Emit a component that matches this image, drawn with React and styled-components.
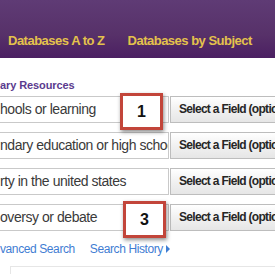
import React from "react";
import styled, { createGlobalStyle } from "styled-components";

const GlobalStyle = createGlobalStyle`
    html, body {
        margin: 0;
        padding: 0;
        background: #ffffff;
        overflow: hidden;
    }
    body {
        width: 275px;
        height: 274px;
        font-family: "Liberation Sans", Arial, sans-serif;
    }
`;

const Header = styled.div`
    height: 58px;
    box-sizing: border-box;
    display: flex;
    align-items: flex-start;
    gap: 23px;
    padding: 34px 0 0 8px;
    background: linear-gradient(#5f3b75, #573169 60%, #4b1f62);
    white-space: nowrap;
`;

const NavLink = styled.span`
    font-size: 13px;
    line-height: 14px;
    font-weight: bold;
    letter-spacing: -0.5px;
    color: #e4c24c;
`;

const Content = styled.div`
    position: relative;
    padding-top: 20px;
`;

const SectionTitle = styled.div`
    font-size: 11px;
    line-height: 14px;
    font-weight: bold;
    letter-spacing: -0.1px;
    color: #5b3b8e;
    margin-bottom: 4px;
    white-space: nowrap;
`;

const Rows = styled.div`
    display: flex;
    flex-direction: column;
    gap: 9px;
`;

const Row = styled.div`
    display: flex;
    height: 27px;
    gap: 1px;
`;

const TermInput = styled.div`
    width: 169px;
    flex: none;
    box-sizing: border-box;
    border: 1px solid #c9c9c9;
    border-left: none;
    overflow: hidden;
    white-space: nowrap;
    font-size: 14px;
    line-height: 25px;
    letter-spacing: -0.45px;
    color: #3a3a3a;
`;

const FieldSelect = styled.div`
    width: 105px;
    flex: none;
    box-sizing: border-box;
    border: 1px solid #bdbdbd;
    border-right: none;
    background: linear-gradient(#ffffff, #f1f1f1 50%, #e6e6e6);
    padding-left: 8px;
    overflow: hidden;
    white-space: nowrap;
    font-size: 12px;
    line-height: 25px;
    font-weight: bold;
    letter-spacing: -0.7px;
    color: #262626;
`;

const Links = styled.div`
    display: flex;
    align-items: center;
    gap: 15px;
    margin-top: 11px;
    white-space: nowrap;
`;

const TextLink = styled.span`
    font-size: 12px;
    line-height: 14px;
    letter-spacing: -0.4px;
    color: #3f7dd3;
    display: inline-flex;
    align-items: center;
    gap: 3px;
`;

const Arrow = styled.span`
    width: 0;
    height: 0;
    border-top: 4px solid transparent;
    border-bottom: 4px solid transparent;
    border-left: 4px solid #3f7dd3;
`;

const Panel = styled.div`
    margin: 10px 0 0 10px;
    height: 20px;
    border-top: 1px solid #e6e6e6;
    border-left: 1px solid #e6e6e6;
`;

const Badge = styled.div`
    position: absolute;
    left: ${(p) => p.$left}px;
    top: ${(p) => p.$top}px;
    width: 43px;
    height: 37px;
    box-sizing: border-box;
    border: 3px solid #c2453a;
    background: #ffffff;
    box-shadow: 1px 2px 4px rgba(0, 0, 0, 0.45);
    display: flex;
    align-items: center;
    justify-content: center;
    font-size: 16px;
    font-weight: bold;
    color: #111111;
`;

const rows = [
    "hools or learning",
    "ndary education or high school",
    "rty in the united states",
    "oversy or debate",
];

export default function App() {
    return (
        <>
            <GlobalStyle />
            <Header>
                <NavLink>Databases A to Z</NavLink>
                <NavLink>Databases by Subject</NavLink>
            </Header>
            <Content>
                <SectionTitle>ary Resources</SectionTitle>
                <Rows>
                    {rows.map((term) => (
                        <Row key={term}>
                            <TermInput>{term}</TermInput>
                            <FieldSelect>Select a Field (optional)</FieldSelect>
                        </Row>
                    ))}
                </Rows>
                <Links>
                    <TextLink>vanced Search</TextLink>
                    <TextLink>
                        Search History
                        <Arrow />
                    </TextLink>
                </Links>
                <Panel />
                <Badge $left={120} $top={35}>1</Badge>
                <Badge $left={123} $top={143}>3</Badge>
            </Content>
        </>
    );
}
